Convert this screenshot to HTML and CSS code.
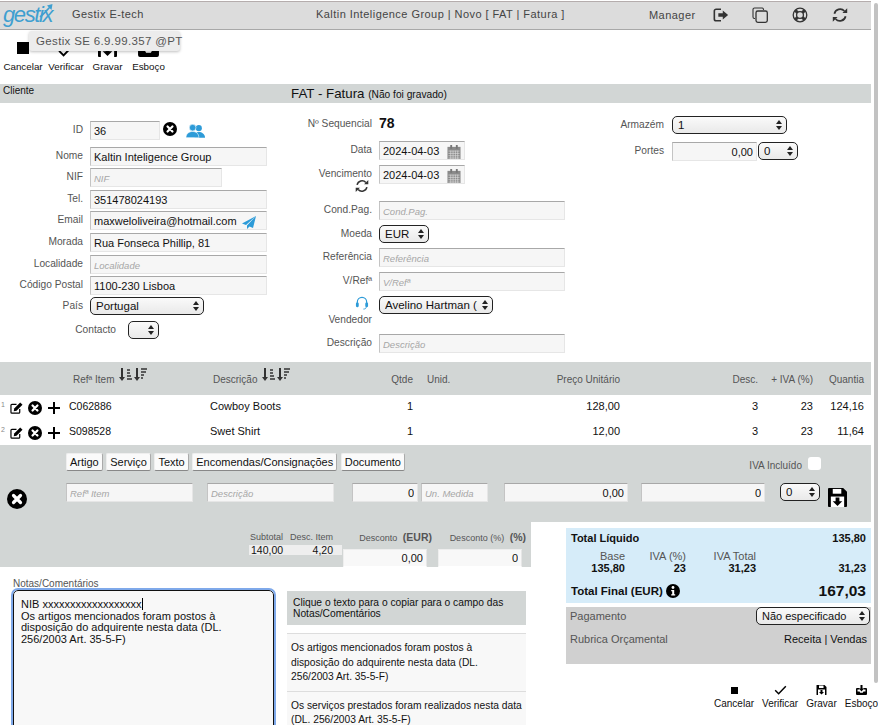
FILE: index.html
```html
<!DOCTYPE html>
<html lang="pt">
  <head>
    <meta charset="UTF-8" />
    <title>Gestix - Fatura</title>
    <link rel="stylesheet" href="styles.css">
  </head>
  <body>
    <svg class="sprites" width="0" height="0">
      <symbol id="i-times" viewBox="0 0 20 20"><circle cx="10" cy="10" r="10" fill="#000"/><path d="M6.5 6.5l7 7M13.5 6.5l-7 7" stroke="#fff" stroke-width="3.2" stroke-linecap="round"/></symbol>
      <symbol id="i-stop" viewBox="0 0 12 12"><rect width="12" height="12" fill="#000"/></symbol>
      <symbol id="i-check" viewBox="0 0 20 16"><path d="M1.5 8.5l5.5 5.5L18.5 2" fill="none" stroke="#000" stroke-width="2.4"/></symbol>
      <symbol id="i-save" viewBox="0 0 20 20"><path d="M1 0h15l4 4v15a1 1 0 0 1-1 1H1a1 1 0 0 1-1-1V1a1 1 0 0 1 1-1z" fill="#000"/><rect x="5" y="1" width="9" height="5" fill="#fff"/><rect x="3" y="9" width="14" height="11" fill="#fff"/><path d="M8 10h4v4h3l-5 5-5-5h3z" fill="#000"/></symbol>
      <symbol id="i-inbox" viewBox="0 0 22 20"><path d="M2 6h5v3H3v4h4l1.500 2.500h5L15 13h4V9h-4V6h5a2 2 0 0 1 2 2v10a2 2 0 0 1-2 2H2a2 2 0 0 1-2-2V8a2 2 0 0 1 2-2z" fill="#000"/><path d="M9 0h4v7h3l-5 6-5-6h3z" fill="#000"/></symbol>
      <symbol id="i-refresh" viewBox="0 0 20 20"><path d="M3 8.500A7.300 7.300 0 0 1 15.500 5M17 11.500A7.300 7.300 0 0 1 4.500 15" fill="none" stroke="currentColor" stroke-width="2.200"/><path d="M13 7.500h6v-6zM7 12.500H1v6z" fill="currentColor"/></symbol>
      <symbol id="i-signout" viewBox="0 0 18 16"><path d="M9 1.500H3.500a2 2 0 0 0-2 2v9a2 2 0 0 0 2 2H9" fill="none" stroke="#333" stroke-width="1.800"/><path d="M6 6h5V2.800L17 8l-6 5.200V10H6z" fill="#333"/></symbol>
      <symbol id="i-copy" viewBox="0 0 16 16"><path d="M3 11.500H2.500a1.500 1.500 0 0 1-1.500-1.500V2.500A1.500 1.500 0 0 1 2.500 1H10a1.500 1.500 0 0 1 1.500 1.500V3" fill="none" stroke="#333" stroke-width="1.100"/><rect x="4" y="4" width="11.300" height="11.300" rx="1.800" fill="none" stroke="#333" stroke-width="1.300"/></symbol>
      <symbol id="i-ring" viewBox="0 0 16 16"><circle cx="8" cy="8" r="6.800" fill="none" stroke="#333" stroke-width="1.300"/><circle cx="8" cy="8" r="3.400" fill="none" stroke="#333" stroke-width="1.300"/><path d="M3.200 3.200l2.400 2.400M12.800 3.200l-2.400 2.400M3.200 12.800l2.400-2.400M12.800 12.800l-2.400-2.400" stroke="#333" stroke-width="3"/></symbol>
      <symbol id="i-users" viewBox="0 0 20 14"><circle cx="13.500" cy="4" r="3.200" fill="#2d9bd8"/><path d="M9 14c0-4 1.500-6 4.500-6s6.500 2 6.500 6z" fill="#2d9bd8"/><circle cx="7" cy="3.500" r="3.500" fill="#2d9bd8" stroke="#fff" stroke-width=".6"/><path d="M0 14c0-4 3-6.500 7-6.500s6.500 2.500 6.500 6.500z" fill="#2d9bd8" stroke="#fff" stroke-width=".6"/></symbol>
      <symbol id="i-plane" viewBox="0 0 14 13"><path d="M14 0L0 7.500l4 1.500zM14 0L5 9.500V13l2.500-2.500 3.500 1.500z" fill="#2d9bd8"/></symbol>
      <symbol id="i-cal" viewBox="0 0 14 15"><rect y="2" width="14" height="13" fill="#8a8a8a"/><rect x="3" width="2" height="4" fill="#777"/><rect x="9" width="2" height="4" fill="#777"/><path d="M1 6.500h12M1 9h12M1 11.500h12M1 14h12M3.500 6v9M6 6v9M8.500 6v9M11 6v9" stroke="#ddd" stroke-width=".7"/></symbol>
      <symbol id="i-edit" viewBox="0 0 14 13"><path d="M10.500 7.500V11a1 1 0 0 1-1 1H2a1 1 0 0 1-1-1V3.500a1 1 0 0 1 1-1h5" fill="none" stroke="#000" stroke-width="1.300"/><path d="M11 .5l2.500 2.500-6.500 6.500-3 .5.500-3z" fill="#000"/></symbol>
      <symbol id="i-plus" viewBox="0 0 12 12"><path d="M6 0v12M0 6h12" stroke="#000" stroke-width="2"/></symbol>
      <symbol id="i-head" viewBox="0 0 14 15"><path d="M2 8V6.500a5 5 0 0 1 10 0V8" fill="none" stroke="#2d9bd8" stroke-width="1.300"/><rect x=".5" y="7" width="3" height="5" rx="1.200" fill="#2d9bd8"/><rect x="10.500" y="7" width="3" height="5" rx="1.200" fill="#2d9bd8"/><path d="M11.500 12c0 1.500-1.500 2-3 2" fill="none" stroke="#2d9bd8"/></symbol>
      <symbol id="i-sort" viewBox="0 0 13 14"><path d="M3 0v10" stroke="#333" stroke-width="2"/><path d="M0 9h6l-3 4z" fill="#333"/><path d="M8 2h3M8 5h3M8 8h4M8 11h5" stroke="#333" stroke-width="1.500"/></symbol>
      <symbol id="i-sort2" viewBox="0 0 13 14"><path d="M3 0v10" stroke="#333" stroke-width="2"/><path d="M0 9h6l-3 4z" fill="#333"/><path d="M7 1h6M7 4h5M7 7h3M7 10h2" stroke="#333" stroke-width="1.500"/></symbol>
      <symbol id="i-info" viewBox="0 0 14 14"><circle cx="7" cy="7" r="7" fill="#000"/><circle cx="7" cy="3.500" r="1.400" fill="#fff"/><path d="M5.200 6h3v4.200h1v1.300H5.200v-1.300h1V7.300h-1z" fill="#fff"/></symbol>
    </svg>

    <div class="page">
      <header class="topbar">
        <div class="logo">gestix<svg class="logo-tick" viewBox="0 0 14 14"><path d="M1 13C5 10 8 6 11 3" fill="none" stroke="#3f9fd0" stroke-width="1.600"/><path d="M8 1.500L13.500 0 12.500 6z" fill="#3f9fd0"/></svg></div>
        <div class="brand">Gestix E-tech</div>
        <div class="crumb">Kaltin Inteligence Group | Novo [ FAT | Fatura ]</div>
        <div class="user">Manager</div>
        <svg class="top-icon icon-a"><use href="#i-signout"/></svg>
        <svg class="top-icon icon-b"><use href="#i-copy"/></svg>
        <svg class="top-icon icon-c"><use href="#i-ring"/></svg>
        <svg class="top-icon icon-d"><use href="#i-refresh"/></svg>
      </header>

      <div class="toolbar">
        <div class="tool tool-1"><svg class="tool-stop"><use href="#i-stop"/></svg><span>Cancelar</span></div>
        <div class="tool tool-2"><svg class="tool-check"><use href="#i-check"/></svg><span>Verificar</span></div>
        <div class="tool tool-3"><svg class="tool-save"><use href="#i-save"/></svg><span>Gravar</span></div>
        <div class="tool tool-4"><svg class="tool-inbox"><use href="#i-inbox"/></svg><span>Esboço</span></div>
      </div>
      <div class="tooltip">Gestix SE 6.9.99.357 @PT</div>

      <div class="section-bar">
        <span class="section-name">Cliente</span>
        <span class="section-title">FAT - Fatura <small>(Não foi gravado)</small></span>
      </div>

      <div class="form">
        <div class="col col-client">
          <div class="field"><label>ID</label><input class="w-id" value="36"><svg class="ic-times"><use href="#i-times"/></svg><svg class="ic-users"><use href="#i-users"/></svg></div>
          <div class="field"><label>Nome</label><input class="w-full" value="Kaltin Inteligence Group"></div>
          <div class="field"><label>NIF</label><input class="w-nif" placeholder="NIF"></div>
          <div class="field"><label>Tel.</label><input class="w-full" value="351478024193"></div>
          <div class="field"><label>Email</label><div class="with-icon"><input class="w-full" value="maxweloliveira@hotmail.com"><svg class="ic-plane"><use href="#i-plane"/></svg></div></div>
          <div class="field"><label>Morada</label><input class="w-full" value="Rua Fonseca Phillip, 81"></div>
          <div class="field"><label>Localidade</label><input class="w-full" placeholder="Localidade"></div>
          <div class="field"><label>Código Postal</label><input class="w-full" value="1100-230 Lisboa"></div>
          <div class="field"><label>País</label><div class="sel w-pais"><select><option>Portugal</option></select></div></div>
          <div class="field field-contact"><label>Contacto</label><div class="sel w-contact"><select><option></option></select></div></div>
        </div>

        <div class="col col-doc">
          <div class="field"><label>Nº Sequencial</label><strong class="seq">78</strong></div>
          <div class="field"><label>Data</label><div class="with-icon"><input class="w-date" value="2024-04-03"><svg class="ic-cal"><use href="#i-cal"/></svg></div></div>
          <div class="field"><label>Vencimento<svg class="ic-refresh"><use href="#i-refresh"/></svg></label><div class="with-icon"><input class="w-date" value="2024-04-03"><svg class="ic-cal"><use href="#i-cal"/></svg></div></div>
          <div class="field"><label>Cond.Pag.</label><input class="w-wide" placeholder="Cond.Pag."></div>
          <div class="field"><label>Moeda</label><div class="sel w-moeda"><select><option>EUR</option></select></div></div>
          <div class="field"><label>Referência</label><input class="w-wide" placeholder="Referência"></div>
          <div class="field"><label>V/Refª</label><input class="w-wide" placeholder="V/Refª"></div>
          <div class="field"><label><svg class="ic-head"><use href="#i-head"/></svg>Vendedor</label><div class="sel w-vend"><select><option>Avelino Hartman (</option></select></div></div>
          <div class="field"><label>Descrição</label><input class="w-wide" placeholder="Descrição"></div>
        </div>

        <div class="col col-misc">
          <div class="field"><label>Armazém</label><div class="sel w-arm"><select><option>1</option></select></div></div>
          <div class="field"><label>Portes</label><input class="w-portes num" value="0,00"><div class="sel w-zero"><select><option>0</option></select></div></div>
        </div>
      </div>

      <div class="lines-head line-grid">
        <span></span>
        <span class="h-ref">Refª Item <svg class="ic-sort"><use href="#i-sort"/></svg><svg class="ic-sort"><use href="#i-sort2"/></svg></span>
        <span class="h-desc">Descrição <svg class="ic-sort"><use href="#i-sort"/></svg><svg class="ic-sort"><use href="#i-sort2"/></svg></span>
        <span class="r">Qtde</span>
        <span class="h-unid">Unid.</span>
        <span class="r">Preço Unitário</span>
        <span class="r">Desc.</span>
        <span class="r">+ IVA (%)</span>
        <span class="r">Quantia</span>
      </div>
      <div class="line line-grid">
        <span class="line-tools"><sup>1</sup><svg class="ic-edit"><use href="#i-edit"/></svg><svg class="ic-del"><use href="#i-times"/></svg><svg class="ic-plus"><use href="#i-plus"/></svg></span>
        <span class="line-ref">C062886</span><span>Cowboy Boots</span><span class="r">1</span><span></span><span class="r">128,00</span><span class="r">3</span><span class="r">23</span><span class="r">124,16</span>
      </div>
      <div class="line line-grid">
        <span class="line-tools"><sup>2</sup><svg class="ic-edit"><use href="#i-edit"/></svg><svg class="ic-del"><use href="#i-times"/></svg><svg class="ic-plus"><use href="#i-plus"/></svg></span>
        <span class="line-ref">S098528</span><span>Swet Shirt</span><span class="r">1</span><span></span><span class="r">12,00</span><span class="r">3</span><span class="r">23</span><span class="r">11,64</span>
      </div>

      <div class="add-line">
        <div class="add-tabs">
          <button>Artigo</button><button>Serviço</button><button>Texto</button><button>Encomendas/Consignações</button><button>Documento</button>
          <label class="iva-inc">IVA Incluído <span class="check"></span></label>
        </div>
        <div class="add-inputs">
          <svg class="ic-close"><use href="#i-times"/></svg>
          <input class="a-ref" placeholder="Refª Item">
          <input class="a-desc" placeholder="Descrição">
          <input class="a-qty num" value="0">
          <input class="a-un" placeholder="Un. Medida">
          <input class="a-price num" value="0,00">
          <input class="a-disc num" value="0">
          <div class="sel a-iva"><select><option>0</option></select></div>
          <svg class="ic-save"><use href="#i-save"/></svg>
        </div>
      </div>

      <div class="bottom">
        <div class="bottom-left">
          <div class="subtotals">
            <div class="sub-block">
              <div class="sub-labels"><span>Subtotal</span><span>Desc. Item</span></div>
              <div class="sub-values"><span>140,00</span><span>4,20</span></div>
            </div>
            <div class="disc-block disc-eur">
              <div class="disc-label">Desconto <b>(EUR)</b></div>
              <input class="num" value="0,00">
            </div>
            <div class="disc-block disc-pct">
              <div class="disc-label">Desconto (%) <b>(%)</b></div>
              <input class="num" value="0">
            </div>
          </div>
          <div class="notes">
            <div class="notes-left">
              <div class="notes-label">Notas/Comentários</div>
              <div class="notes-box">NIB xxxxxxxxxxxxxxxxxx<span class="caret"></span><br>Os artigos mencionados foram postos à disposição do adquirente nesta data (DL. 256/2003 Art. 35-5-F)</div>
            </div>
            <div class="presets">
              <div class="presets-head">Clique o texto para o copiar para o campo das Notas/Comentários</div>
              <div class="preset">Os artigos mencionados foram postos à disposição do adquirente nesta data (DL. 256/2003 Art. 35-5-F)</div>
              <div class="preset">Os serviços prestados foram realizados nesta data (DL. 256/2003 Art. 35-5-F)</div>
            </div>
          </div>
        </div>

        <div class="bottom-right">
          <div class="totals">
            <div class="tot-row"><b>Total Líquido</b><b>135,80</b></div>
            <div class="tax-row">
              <div class="tax-cell tax-base">Base<b>135,80</b></div>
              <div class="tax-cell tax-pct">IVA (%)<b>23</b></div>
              <div class="tax-cell tax-total">IVA Total<b>31,23</b></div>
              <b class="tax-sum">31,23</b>
            </div>
            <div class="tot-row tot-final"><b>Total Final (EUR) <svg class="ic-info"><use href="#i-info"/></svg></b><b class="grand">167,03</b></div>
          </div>
          <div class="payment">
            <div class="pay-row"><span>Pagamento</span><div class="sel w-pay"><select><option>Não especificado</option></select></div></div>
            <div class="pay-row pay-rubrica"><span>Rubrica Orçamental</span><em>Receita | Vendas</em></div>
          </div>
          <div class="actions">
            <div class="action"><svg class="act-stop"><use href="#i-stop"/></svg><span>Cancelar</span></div>
            <div class="action"><svg class="act-check"><use href="#i-check"/></svg><span>Verificar</span></div>
            <div class="action"><svg class="act-save"><use href="#i-save"/></svg><span>Gravar</span></div>
            <div class="action"><svg class="act-inbox"><use href="#i-inbox"/></svg><span>Esboço</span></div>
          </div>
        </div>
      </div>
    </div>
    <div class="scroll-thumb"></div>
  </body>
</html>
```

FILE: styles.css
```css
:root {
  --band: #d2d6d5;
  --field: #f6f6f6;
  --label: #555;
  --blue: #2d9bd8;
}

* {
  margin: 0;
  padding: 0;
  box-sizing: border-box;
}

html,
body {
  height: 725px;
  overflow: hidden;
  background: #fff;
}

body {
  font-family: "Liberation Sans", Arial, sans-serif;
  font-size: 11px;
  color: #111;
  position: relative;
}

.sprites {
  position: absolute;
}

svg {
  display: inline-block;
}

.page {
  width: 871px;
  position: relative;
}

.scroll-thumb {
  position: absolute;
  top: 3px;
  right: 0;
  width: 4px;
  height: 680px;
  background: #c2c2c2;
  border-radius: 2px;
}

/* barra de topo */
.topbar {
  height: 29px;
  margin-top: 1px;
  background: #dcdcdc;
  border-top: 1px solid #b5adad;
  border-bottom: 1px solid #a8a8a8;
  position: relative;
  letter-spacing: 0.45px;
  color: #444;
}

.topbar > * {
  position: absolute;
}

.logo {
  left: 3px;
  top: 0;
  font-size: 22px;
  font-style: italic;
  letter-spacing: -1.4px;
  color: #3f9fd0;
  line-height: 26px;
}

.logo-tick {
  position: absolute;
  left: 36px;
  top: 2px;
  width: 14px;
  height: 14px;
}

.brand {
  left: 72px;
  top: 6px;
}

.crumb {
  left: 316px;
  top: 6px;
}

.user {
  left: 649px;
  top: 7px;
}

.top-icon {
  top: 5px;
  width: 16px;
  height: 16px;
}

.icon-a { left: 713px; }
.icon-b { left: 752px; }
.icon-c { left: 792px; }
.icon-d { left: 832px; color: #333; }

/* botões */
.toolbar {
  height: 54px;
  display: flex;
  padding-left: 4px;
}

.tool {
  display: flex;
  flex-direction: column;
  align-items: center;
  justify-content: flex-end;
  height: 43px;
  font-size: 9.8px;
}

.tool span {
  margin-top: 5px;
  line-height: 12px;
}

.tool-1 { width: 38px; }
.tool-2 { width: 34px; margin-left: 7px; }
.tool-3 { width: 29px; margin-left: 10px; }
.tool-4 { width: 31px; margin-left: 11px; }

.tool-stop { width: 12px; height: 12px; margin-bottom: 2px; }
.tool-check { width: 20px; height: 13px; margin-bottom: -1px; }
.tool-save { width: 19px; height: 19px; margin-bottom: -1px; }
.tool-inbox { width: 21px; height: 19px; margin-bottom: -1px; }

.tooltip {
  position: absolute;
  left: 29px;
  top: 30px;
  width: 151px;
  height: 20px;
  padding: 3px 7px;
  background: #ececec;
  border-radius: 3px;
  box-shadow: 0 1px 3px rgba(0, 0, 0, 0.25);
  color: #555;
  font-size: 11.5px;
  letter-spacing: 0.35px;
  line-height: 14px;
  white-space: nowrap;
}

.section-bar {
  height: 19px;
  background: var(--band);
  position: relative;
}

.section-name {
  position: absolute;
  left: 3px;
  top: 1px;
  font-size: 10px;
}

.section-title {
  display: block;
  text-align: center;
  width: 738px;
  font-size: 13.3px;
  line-height: 19px;
}

.section-title small {
  font-size: 10.2px;
}

/* formulário */
.form {
  height: 259px;
  display: flex;
}

.col {
  display: grid;
  align-content: start;
}

.field {
  display: flex;
  align-items: flex-start;
  height: 19px;
}

.field label {
  flex: none;
  text-align: right;
  color: var(--label);
  font-size: 10.2px;
  line-height: 17px;
}

input {
  height: 19px;
  background: var(--field);
  border: 1px solid #e6e6e6;
  border-top-color: #a8a8a8;
  border-left-color: #c4c4c4;
  font-family: inherit;
  font-size: 11px;
  color: #111;
  padding: 0 3px;
  outline: none;
}

input::placeholder {
  font-style: italic;
  font-size: 9.5px;
  color: #a6a6a6;
}

input.num {
  text-align: right;
}

.sel {
  position: relative;
  height: 18px;
}

.sel select {
  appearance: none;
  width: 100%;
  height: 100%;
  border: 1px solid #222;
  border-radius: 5px;
  background: linear-gradient(#fafafa, #e9e9e9);
  font-family: inherit;
  font-size: 11.5px;
  color: #111;
  padding: 0 0 0 5px;
}

.sel::before,
.sel::after {
  content: "";
  position: absolute;
  right: 5px;
  border-left: 3px solid transparent;
  border-right: 3px solid transparent;
}

.sel::before {
  top: 4px;
  border-bottom: 4px solid #222;
}

.sel::after {
  bottom: 4px;
  border-top: 4px solid #222;
}

.col-client {
  width: 290px;
  padding-top: 18px;
  grid-template-rows: 26px 21px 22px 21px 22px 22px 21px 21px 24px 19px;
}

.col-client .field label {
  width: 83px;
  margin-right: 7px;
}

.col-client .field-contact label {
  width: 116px;
  margin-right: 12px;
}

.w-id { width: 70px; }
.w-full { width: 177px; }
.w-nif { width: 132px; }
.w-pais { width: 114px; }
.w-contact { width: 31px; }

.ic-times {
  width: 14px;
  height: 14px;
  margin: 1px 0 0 3px;
}

.ic-users {
  width: 19px;
  height: 14px;
  margin: 3px 0 0 9px;
}

.with-icon {
  position: relative;
}

.ic-plane {
  position: absolute;
  right: 11px;
  top: 5px;
  width: 14px;
  height: 13px;
}

.ic-cal {
  position: absolute;
  right: 4px;
  top: 4px;
  width: 14px;
  height: 14px;
}

.col-doc {
  width: 290px;
  padding-top: 12px;
  grid-template-rows: 26px 24px 36px 24px 23px 24px 24px 38px 19px;
}

.col-doc .field label {
  width: 82px;
  margin-right: 7px;
}

.seq {
  font-size: 14px;
  line-height: 16px;
}

.w-date { width: 86px; }
.w-wide { width: 186px; }
.w-moeda { width: 50px; }
.w-vend { width: 114px; }

.ic-refresh {
  display: block;
  margin: -3px 3px 0 auto;
  width: 14px;
  height: 14px;
  color: #333;
}

.ic-head {
  display: block;
  margin: 0 3px 1px auto;
  width: 14px;
  height: 14px;
}

.col-misc {
  padding-top: 13px;
  grid-template-rows: 26px 19px;
}

.col-misc .field label {
  width: 84px;
  margin-right: 8px;
}

.w-arm { width: 115px; }
.w-portes { width: 85px; }
.w-zero { width: 40px; margin-left: 1px; }

/* linhas */
.line-grid {
  display: grid;
  grid-template-columns: 69px 141px 150px 53px 57px 150px 138px 55px 51px;
  padding-right: 7px;
}

.r {
  text-align: right;
}

.lines-head {
  height: 33px;
  background: var(--band);
  color: var(--label);
  font-size: 10px;
  align-items: center;
  padding-top: 2px;
}

.h-ref {
  padding-left: 4px;
}

.h-desc {
  padding-left: 3px;
}

.h-unid {
  padding-left: 14px;
}

.ic-sort {
  width: 13px;
  height: 14px;
  margin: 0 0 10px 2px;
  vertical-align: middle;
}

.line {
  height: 25px;
  align-items: center;
  padding-bottom: 3px;
}

.line-ref {
  font-size: 10.5px;
}

.line-tools {
  display: flex;
  align-items: center;
  position: relative;
  top: 2px;
}

.line-tools sup {
  width: 10px;
  font-size: 7px;
  color: #888;
  line-height: 7px;
  align-self: flex-start;
  padding: 0 0 0 1px;
}

.ic-edit { width: 13px; height: 12px; }
.ic-del { width: 14px; height: 14px; margin-left: 5px; }
.ic-plus { width: 12px; height: 12px; margin-left: 6px; }

/* nova linha */
.add-line {
  height: 77px;
  background: var(--band);
}

.add-tabs {
  display: flex;
  gap: 3.5px;
  padding: 8px 0 0 66px;
  height: 38px;
}

.add-tabs button {
  height: 18px;
  padding: 0 3px;
  background: #fafafa;
  border: 1px solid #eee;
  border-bottom-color: #888;
  border-right-color: #aaa;
  border-radius: 2px;
  font-family: inherit;
  font-size: 11px;
  color: #111;
}

.iva-inc {
  margin-left: auto;
  margin-right: 50px;
  color: var(--label);
  font-size: 10px;
  display: flex;
  gap: 6px;
  align-items: center;
  height: 20px;
  margin-top: 2px;
}

.check {
  width: 13px;
  height: 13px;
  background: #fff;
  border-radius: 3px;
  margin-top: -4px;
}

.add-inputs {
  display: flex;
  align-items: flex-start;
  padding-left: 7px;
}

.ic-close { width: 20px; height: 20px; margin: 6px 39px 0 0; }
.a-ref { width: 127px; margin-right: 14px; }
.a-desc { width: 127px; margin-right: 18px; }
.a-qty { width: 66px; margin-right: 3px; }
.a-un { width: 67px; margin-right: 16px; }
.a-price { width: 124px; margin-right: 13px; }
.a-disc { width: 124px; margin-right: 15px; }
.a-iva { width: 40px; margin-right: 8px; }
.ic-save { width: 19px; height: 19px; margin-top: 5px; }

/* rodapé */
.bottom {
  display: flex;
  align-items: flex-start;
}

.bottom-left {
  width: 531px;
  flex: none;
}

.subtotals {
  height: 45px;
  background: var(--band);
  display: flex;
  position: relative;
  font-size: 9px;
  color: var(--label);
}

.sub-block {
  margin-left: 249px;
  width: 93px;
  padding-top: 10px;
}

.sub-labels {
  display: flex;
  justify-content: space-between;
  padding: 0 9px 0 1px;
  font-size: 9px;
}

.sub-values {
  display: flex;
  justify-content: space-between;
  background: #eee;
  font-size: 10.5px;
  color: #111;
  height: 10px;
  line-height: 10px;
  padding: 0 9px 0 2px;
  margin-top: 3px;
}

.disc-block {
  padding-top: 9px;
}

.disc-eur {
  width: 84px;
  margin-left: 1px;
}

.disc-pct {
  width: 84px;
  margin-left: 11px;
}

.disc-label {
  text-align: right;
  height: 18px;
  line-height: 12px;
  font-size: 9px;
  white-space: nowrap;
}

.disc-eur .disc-label {
  margin-right: -5px;
}

.disc-pct .disc-label {
  margin-right: -4px;
}

.disc-label b {
  font-size: 10.5px;
  margin-left: 3px;
}

.disc-block input {
  display: block;
  width: 100%;
  height: 18px;
  background: #f8f8f8;
  border-top-color: #eee;
  border-left-color: #eee;
  border-bottom-color: #fff;
}

.notes {
  display: flex;
  padding-left: 13px;
}

.notes-left {
  width: 261px;
  margin-right: 13px;
}

.notes-label {
  height: 23px;
  padding-top: 11px;
  font-size: 10px;
  line-height: 11px;
  color: var(--label);
}

.notes-box {
  height: 220px;
  background: #f8f8f8;
  border: 1px solid #111;
  border-radius: 5px;
  outline: 2px solid #7fa9ea;
  outline-offset: 0;
  padding: 8px 7px;
  font-size: 11px;
  line-height: 11.7px;
}

.caret {
  border-right: 1px solid #000;
  margin-left: 1px;
}

.presets {
  width: 239px;
  padding-top: 24px;
}

.presets-head {
  height: 34px;
  background: var(--band);
  padding: 6px 6px 0;
  font-size: 10.25px;
  line-height: 11px;
  margin-bottom: 8px;
}

.preset {
  background: #f8f8f8;
  border-top: 1px solid #ddd;
  padding: 7px 4px 6px;
  font-size: 10.25px;
  line-height: 14.5px;
}

.bottom-right {
  flex: none;
  width: 340px;
  padding: 6px 0 0 35px;
}

.totals {
  height: 75px;
  background: #d6ecf9;
  padding: 2px 5px 0 5px;
}

.tot-row {
  display: flex;
  justify-content: space-between;
  align-items: center;
  height: 15px;
  font-size: 11px;
}

.tax-row {
  display: flex;
  align-items: flex-end;
  height: 28px;
  margin-top: 1px;
  color: #555;
  font-size: 11px;
}

.tax-cell {
  display: flex;
  flex-direction: column;
  text-align: right;
  line-height: 11.5px;
}

.tax-cell b {
  color: #111;
  font-size: 11px;
}

.tax-base { width: 54px; }
.tax-pct { width: 61px; }
.tax-total { width: 70px; }

.tax-sum {
  margin-left: auto;
  color: #111;
}

.tot-final {
  height: 24px;
  margin-top: 5px;
}

.tot-final b {
  display: flex;
  align-items: center;
  gap: 3px;
  font-size: 11.5px;
}

.ic-info {
  width: 14px;
  height: 14px;
}

.tot-final .grand {
  font-size: 15.500px;
}

.payment {
  height: 57px;
  margin-top: 4px;
  background: #d0d0d0;
  padding: 0 1px 0 4px;
  color: var(--label);
}

.pay-row {
  display: flex;
  justify-content: space-between;
  align-items: center;
  height: 18px;
}

.pay-rubrica {
  margin-top: 5px;
}

.pay-rubrica em {
  font-style: normal;
  color: #111;
  padding-right: 3px;
}

.w-pay {
  width: 114px;
}

.w-pay select {
  font-size: 11px;
}

.actions {
  display: flex;
  padding: 21px 0 0 148px;
  font-size: 10px;
}

.action {
  display: flex;
  flex-direction: column;
  align-items: center;
  justify-content: flex-end;
  height: 24px;
  margin-right: 8px;
  white-space: nowrap;
}

.action span {
  margin-top: 3px;
  line-height: 11px;
}

.act-stop { width: 7px; height: 7px; margin-bottom: 1px; }
.act-check { width: 13px; height: 10px; }
.act-save { width: 11px; height: 11px; }
.act-inbox { width: 13px; height: 12px; }
```
